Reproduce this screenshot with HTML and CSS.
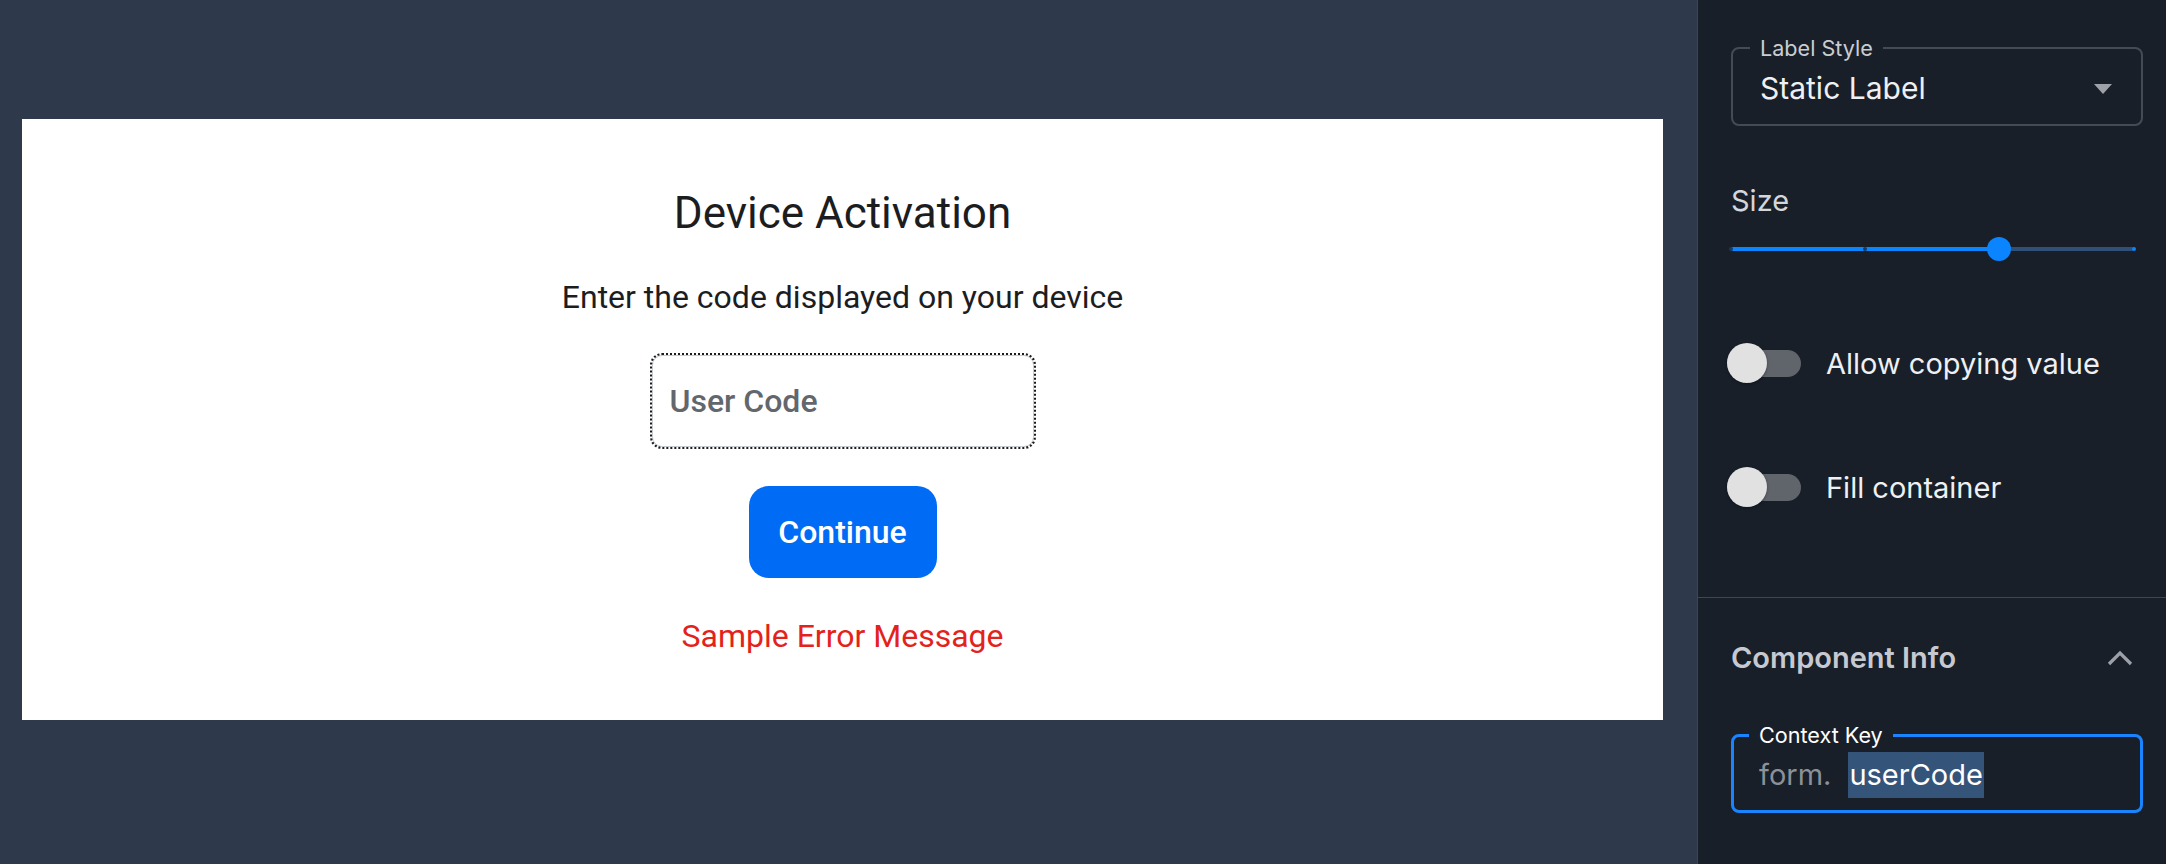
FILE: index.html
```html
<!DOCTYPE html>
<html lang="en">
<head>
  <meta charset="UTF-8">
  <title>Device Activation</title>
  <link rel="stylesheet" href="styles.css">
</head>
<body>
<div class="app">
  <div class="stage">
    <div class="card">
      <div class="title">Device Activation</div>
      <div class="subtitle">Enter the code displayed on your device</div>
      <div class="codeInput">User Code</div>
      <div class="continueBtn">Continue</div>
      <div class="errorMsg">Sample Error Message</div>
    </div>
  </div>

  <div class="panel">
    <div class="panelTop">
      <fieldset class="field">
        <legend>Label Style</legend>
        <div class="selectRow">
          <span>Static Label</span>
          <span class="caret"></span>
        </div>
      </fieldset>

      <div class="sizeLabel">Size</div>
      <div class="slider">
        <div class="track">
          <div class="fill" style="width: 66.6%"></div>
        </div>
        <span class="tick on" style="left: 0%"></span>
        <span class="tick on" style="left: 33.3%"></span>
        <span class="tick off" style="left: 100%"></span>
        <span class="thumb" style="left: 66.6%"></span>
      </div>

      <div class="toggleRow first">
        <div class="switch"><span class="knob"></span></div>
        <span>Allow copying value</span>
      </div>
      <div class="toggleRow">
        <div class="switch"><span class="knob"></span></div>
        <span>Fill container</span>
      </div>
    </div>

    <div class="panelSection">
      <div class="sectionHead">
        <span>Component Info</span>
        <svg class="chevron" width="26" height="16" viewBox="0 0 26 16">
          <polyline points="2,14 13,3 24,14" fill="none" stroke="#9ca1a9" stroke-width="3.2"/>
        </svg>
      </div>
      <fieldset class="field focused">
        <legend>Context Key</legend>
        <div class="keyRow">
          <span class="prefix">form.</span>
          <span class="selected">userCode</span>
        </div>
      </fieldset>
    </div>
  </div>
</div>
</body>
</html>
```

FILE: styles.css
```css
body {
  margin: 0;
  background-color: #2e3a4b;
  font-family: Roboto, "Liberation Sans", sans-serif;
}

.app {
  display: flex;
  height: 864px;
  overflow: hidden;
}

.stage {
  flex: 1;
  padding: 119px 34px 0 22px;
}

.card {
  background-color: #ffffff;
  display: flex;
  flex-direction: column;
  align-items: center;
  gap: 39px;
  padding: 68px 0 65px;
  color: #1c1d1f;
}

.card .title {
  font-size: 44px;
  line-height: 52px;
}

.card .subtitle {
  font-size: 32px;
  line-height: 38px;
}

.codeInput {
  box-sizing: border-box;
  width: 382px;
  height: 92px;
  border: 1px solid #c8cbd0;
  border-radius: 10px;
  outline: 2.5px dotted #1a1b1d;
  padding: 0 17px;
  display: flex;
  align-items: center;
  font-size: 32px;
  font-weight: 500;
  color: #62676e;
}

.continueBtn {
  width: 188px;
  height: 92px;
  border-radius: 20px;
  background-color: #006cf5;
  color: #ffffff;
  font-size: 32px;
  font-weight: 500;
  display: flex;
  align-items: center;
  justify-content: center;
}

.errorMsg {
  font-size: 32px;
  line-height: 38px;
  color: #e3231b;
}

/* right side panel */
.panel {
  width: 468px;
  background-color: #181f29;
  border-left: 1px solid #3a4656;
  font-family: Inter, "Noto Sans", sans-serif;
  color: #eef0f3;
  display: flex;
  flex-direction: column;
}

.panelTop {
  padding: 36px 23px 90px 33px;
  border-bottom: 1px solid #3b4754;
}

.field {
  margin: 0;
  border: 2px solid #454b54;
  border-radius: 8px;
  padding: 11px 29px 18px 27px;
}

.field legend {
  font-size: 21.6px;
  line-height: 24px;
  padding: 0 10px;
  margin-left: -10px;
  color: #c9cdd3;
}

.selectRow {
  display: flex;
  align-items: center;
  justify-content: space-between;
  font-size: 30px;
  line-height: 35px;
}

.caret {
  width: 0;
  height: 0;
  border-left: 9.5px solid transparent;
  border-right: 9.5px solid transparent;
  border-top: 10px solid #9ea2a8;
}

.sizeLabel {
  margin-top: 57px;
  font-size: 29px;
  line-height: 35px;
  color: #d3d6db;
}

.slider {
  position: relative;
  height: 24px;
  margin-top: 19px;
  margin-right: 9px;
  display: flex;
  align-items: center;
}

.slider .track {
  flex: 1;
  height: 4px;
  border-radius: 2px;
  background-color: #2f5078;
}

.slider .fill {
  height: 4px;
  border-radius: 2px;
  background-color: #0a84ff;
}

.slider .tick {
  position: absolute;
  top: 10px;
  width: 4px;
  height: 4px;
  margin-left: -2px;
  border-radius: 50%;
}

.slider .tick.on {
  background-color: #1b3a5e;
}

.slider .tick.off {
  background-color: #0a84ff;
}

.slider .thumb {
  position: absolute;
  top: 0;
  width: 24px;
  height: 24px;
  margin-left: -12px;
  border-radius: 50%;
  background-color: #0a84ff;
}

.toggleRow {
  display: flex;
  align-items: center;
  gap: 25px;
  height: 40px;
  margin-top: 84px;
  margin-left: -4px;
  font-size: 29px;
}

.toggleRow.first {
  margin-top: 82px;
}

.switch {
  width: 74px;
  height: 27px;
  border-radius: 14px;
  background-color: #60646b;
  display: flex;
  align-items: center;
}

.switch .knob {
  width: 40px;
  height: 40px;
  border-radius: 50%;
  background-color: #e1e1e1;
  box-shadow: 0 1px 3px rgba(0, 0, 0, 0.35);
}

.panelSection {
  padding: 42px 23px 0 33px;
}

.sectionHead {
  display: flex;
  align-items: center;
  justify-content: space-between;
  font-size: 29px;
  line-height: 35px;
  font-weight: 600;
  color: #c6cad0;
  margin-bottom: 48px;
}

.sectionHead .chevron {
  margin-right: 10px;
}

.field.focused {
  border: 3px solid #1a84ff;
  padding: 5px 25px 12px 25px;
}

.field.focused legend {
  color: #ffffff;
}

.keyRow {
  display: flex;
  align-items: center;
  font-size: 29px;
  line-height: 46px;
}

.keyRow .prefix {
  color: #8c9199;
  margin-right: 17px;
}

.keyRow .selected {
  background-color: #34547a;
  color: #ffffff;
  padding: 0 1px;
}
```
